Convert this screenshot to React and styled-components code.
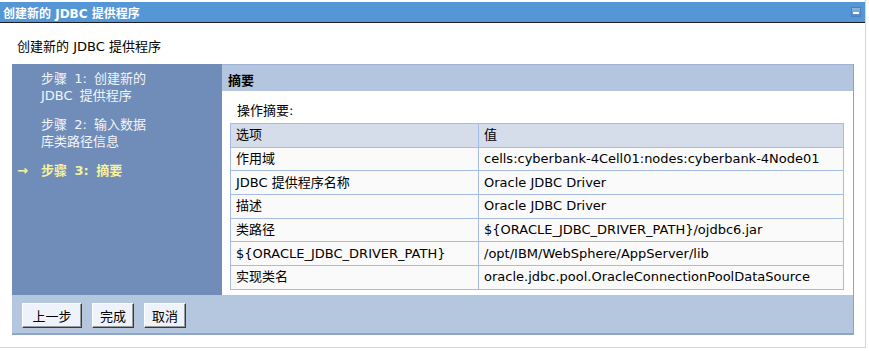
import React from "react";
import styled, { createGlobalStyle } from "styled-components";

const GlobalStyle = createGlobalStyle`
  body {
    margin: 0;
    background: #fff;
    font-family: "DejaVu Sans", "Noto Sans CJK SC", sans-serif;
    font-size: 13px;
    color: #000;
  }
`;

const Frame = styled.div`
  width: 866px;
  height: 348px;
  box-sizing: border-box;
  padding-top: 2px;
  border-right: 1px solid #d6d6d6;
  border-bottom: 1px solid #d6d6d6;
`;

const TitleBar = styled.div`
  height: 20px;
  background: #5597d6;
  border-bottom: 1px solid #1c1c1c;
  display: flex;
  align-items: center;
  justify-content: space-between;
  padding: 0 4px 0 3px;
  color: #fff;
  font-weight: bold;
  font-size: 12px;
`;

const MinButton = styled.span`
  width: 10px;
  height: 10px;
  background: linear-gradient(#8db7e4, #4f86c4);
  border: 1px solid #4b7fbd;
  display: flex;
  align-items: flex-end;
  justify-content: center;
  box-sizing: border-box;
  padding-bottom: 2px;

  &::after {
    content: "";
    width: 6px;
    height: 2px;
    background: #fff;
  }
`;

const Content = styled.div`
  padding: 0 12px 0 12px;
`;

const Subtitle = styled.div`
  height: 16px;
  line-height: 16px;
  margin: 16px 0 9px 5px;
`;

const Wizard = styled.div`
  border-right: 1px solid #8aa3c8;
  width: 841px;
`;

const Columns = styled.div`
  display: grid;
  grid-template-columns: 210px 1fr;
  height: 231px;
`;

const Steps = styled.div`
  background: #6f8db8;
  padding: 6px 0 0 5px;
  display: flex;
  flex-direction: column;
  gap: 12px;
`;

const Step = styled.div`
  display: flex;
  color: ${(p) => (p.$current ? "#f7f29c" : "#f2f5fa")};
  font-weight: ${(p) => (p.$current ? "bold" : "normal")};
  line-height: 17px;
`;

const Arrow = styled.span`
  width: 24px;
  flex: none;
`;

const StepText = styled.span`
  width: 112px;
  word-spacing: 3px;
`;

const Main = styled.div`
  background: #fff;
  display: flex;
  flex-direction: column;
`;

const MainHeader = styled.div`
  height: 27px;
  background: #b4c6df;
  border-top: 1px solid #9fb4d4;
  box-sizing: border-box;
  padding: 5px 0 0 6px;
  font-weight: bold;
`;

const Caption = styled.div`
  padding: 12px 0 0 15px;
  height: 29px;
  line-height: 16px;
  box-sizing: border-box;
`;

const Table = styled.table`
  margin: 3px 0 0 8px;
  width: 614px;
  border-collapse: collapse;
  border: 1px solid #8ea8d8;
`;

const Cell = styled.td`
  border: 1px solid #a7bce3;
  height: 22.7px;
  padding: 0 0 0 5px;
  line-height: 16px;
  background: ${(p) => (p.$head ? "#d5dcea" : "#fafafa")};
  width: ${(p) => p.$w || "auto"};
  white-space: nowrap;
  vertical-align: middle;
`;

const Footer = styled.div`
  height: 40px;
  background: #b5c6df;
  border-bottom: 2px solid #8ea6ca;
  box-sizing: border-box;
  display: flex;
  align-items: flex-start;
  gap: 10px;
  padding: 8px 0 0 10px;
`;

const Button = styled.button`
  height: 25px;
  min-width: ${(p) => p.$min || "0"};
  padding: 0 7px;
  font: inherit;
  background: #eef2fa;
  border: 1px solid;
  border-color: #ffffff #3a3a3a #3a3a3a #ffffff;
  box-shadow: inset -1px -1px 0 #9a9a9a;
  color: #000;
`;

const rows = [
  ["作用域", "cells:cyberbank-4Cell01:nodes:cyberbank-4Node01"],
  ["JDBC 提供程序名称", "Oracle JDBC Driver"],
  ["描述", "Oracle JDBC Driver"],
  ["类路径", "${ORACLE_JDBC_DRIVER_PATH}/ojdbc6.jar"],
  ["${ORACLE_JDBC_DRIVER_PATH}", "/opt/IBM/WebSphere/AppServer/lib"],
  ["实现类名", "oracle.jdbc.pool.OracleConnectionPoolDataSource"],
];

export default function App() {
  return (
    <>
      <GlobalStyle />
      <Frame>
        <TitleBar>
          <span>创建新的 JDBC 提供程序</span>
          <MinButton />
        </TitleBar>
        <Content>
          <Subtitle>创建新的 JDBC 提供程序</Subtitle>
          <Wizard>
            <Columns>
              <Steps>
                <Step>
                  <Arrow />
                  <StepText>步骤 1: 创建新的 JDBC 提供程序</StepText>
                </Step>
                <Step>
                  <Arrow />
                  <StepText>步骤 2: 输入数据库类路径信息</StepText>
                </Step>
                <Step $current>
                  <Arrow>→</Arrow>
                  <StepText>步骤 3: 摘要</StepText>
                </Step>
              </Steps>
              <Main>
                <MainHeader>摘要</MainHeader>
                <Caption>操作摘要:</Caption>
                <Table>
                  <tbody>
                    <tr>
                      <Cell $head $w="242px">选项</Cell>
                      <Cell $head>值</Cell>
                    </tr>
                    {rows.map(([k, v]) => (
                      <tr key={k}>
                        <Cell>{k}</Cell>
                        <Cell>{v}</Cell>
                      </tr>
                    ))}
                  </tbody>
                </Table>
              </Main>
            </Columns>
            <Footer>
              <Button $min="60px">上一步</Button>
              <Button>完成</Button>
              <Button>取消</Button>
            </Footer>
          </Wizard>
        </Content>
      </Frame>
    </>
  );
}
